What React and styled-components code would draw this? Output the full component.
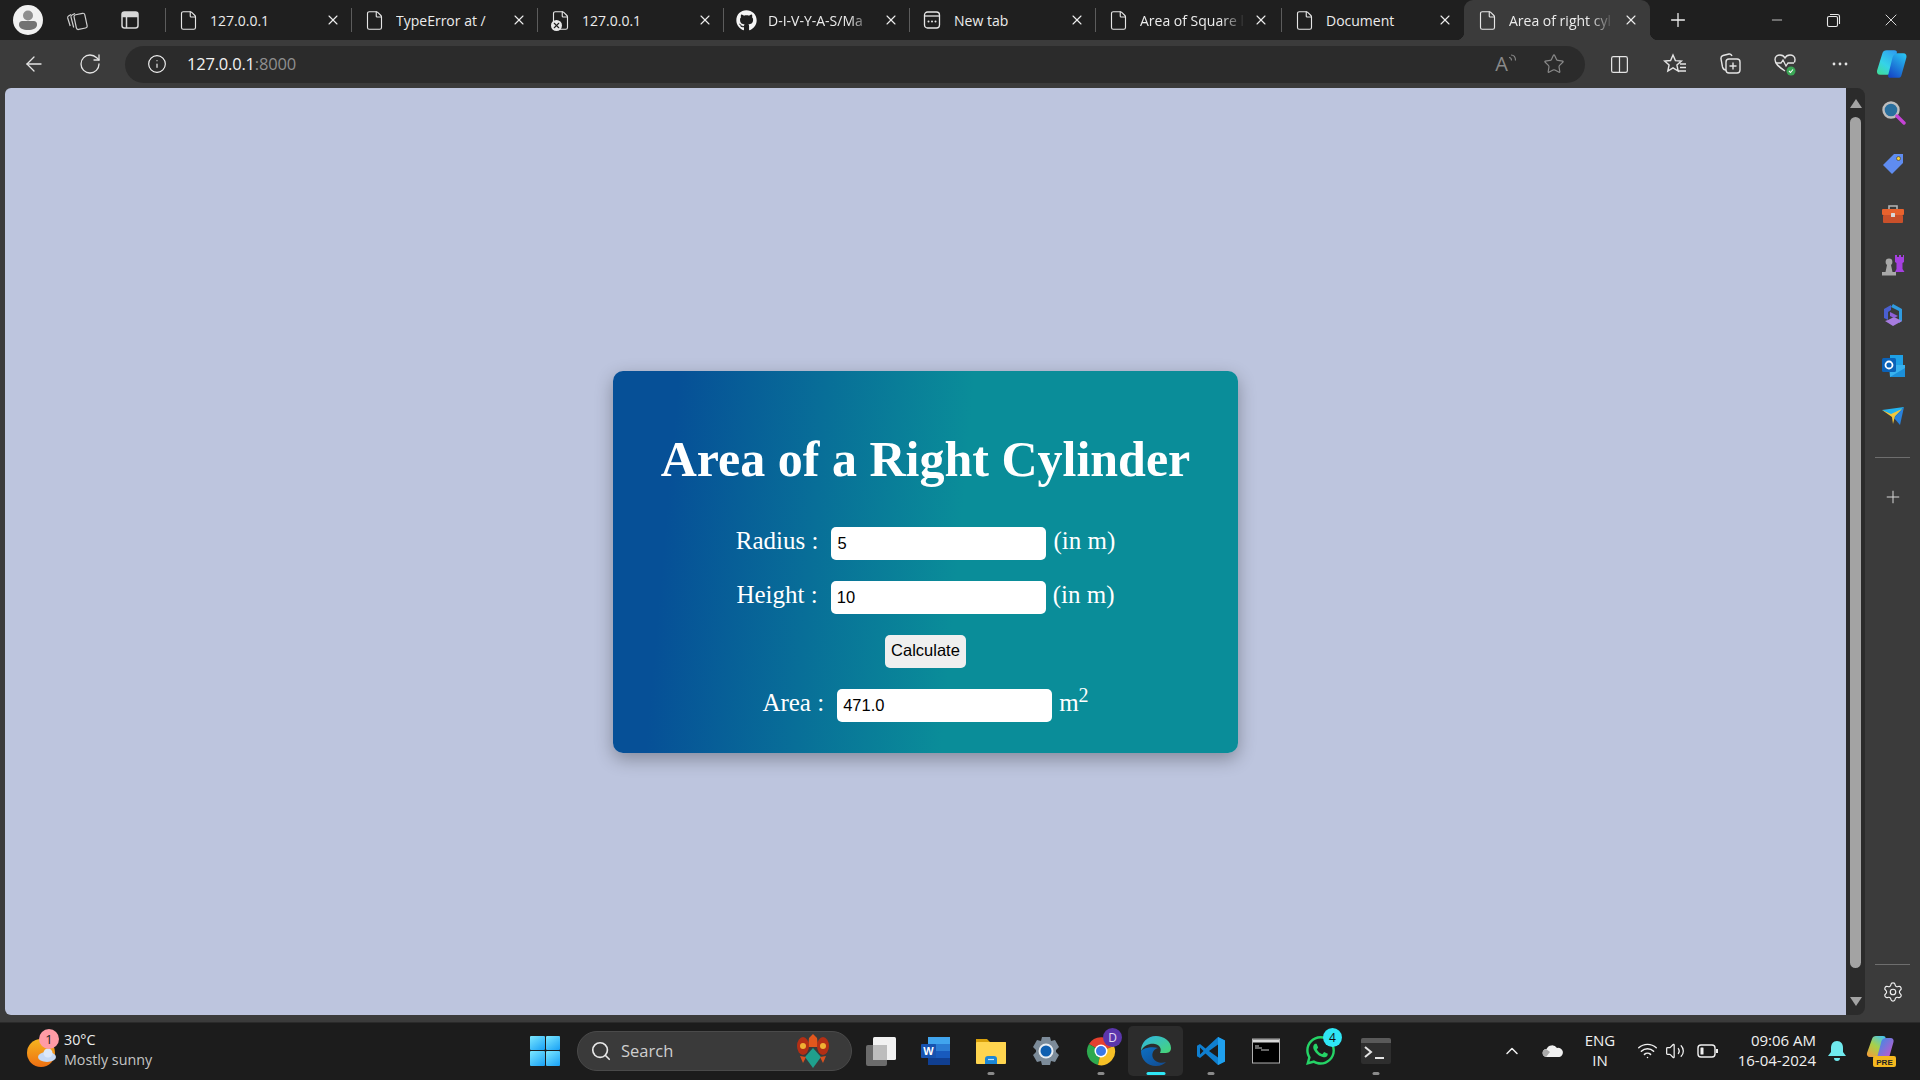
import React from 'react';
import styled, { createGlobalStyle } from 'styled-components';
import {
  File, X, Plus, Minus, ArrowLeft, RotateCw, Info, Star, Settings, Search,
  ChevronUp, Wifi, Volume2, Columns2,
} from 'lucide-react';
import { FaGithub, FaWhatsapp } from 'react-icons/fa';

const UI_FONT = '"Open Sans", "Noto Sans", "Liberation Sans", sans-serif';

const GlobalStyle = createGlobalStyle`
  html, body {
    margin: 0;
    padding: 0;
    overflow: hidden;
    background: #3b3b3b;
  }
  * { box-sizing: border-box; }
`;

const Screen = styled.div`
  width: 1920px;
  height: 1080px;
  display: flex;
  flex-direction: column;
  font-family: ${UI_FONT};
  color: #f2f2f2;
`;

/* tab strip */
const TabStrip = styled.div`
  height: 40px;
  display: flex;
  align-items: stretch;
  background: #1f1f1f;
  flex-shrink: 0;
`;
const StripLeft = styled.div`
  width: 165px;
  display: flex;
  align-items: center;
  padding-left: 13px;
  gap: 23px;
`;
const Avatar = styled.div`
  width: 30px;
  height: 30px;
  margin-right: -4px;
  border-radius: 50%;
  background: #f1f1f1;
  display: flex;
  align-items: center;
  justify-content: center;
`;
const StripButton = styled.div`
  width: 30px;
  display: flex;
  justify-content: center;
  color: #d8d8d8;
`;
const Tab = styled.div`
  width: 186px;
  display: flex;
  align-items: center;
  position: relative;
  padding-left: 12px;
  color: #ececec;
  font-size: 14px;
  background: ${(p) => (p.$active ? '#3b3b3b' : 'transparent')};
  border-radius: ${(p) => (p.$active ? '9px 9px 0 0' : '0')};
  margin-left: ${(p) => (p.$active ? '-3px' : '0')};
  &::before {
    content: '';
    position: absolute;
    left: ${(p) => (p.$active ? '-8px' : '0')};
    top: ${(p) => (p.$active ? 'auto' : '8px')};
    bottom: ${(p) => (p.$active ? '0' : '8px')};
    width: ${(p) => (p.$active ? '8px' : '1px')};
    height: ${(p) => (p.$active ? '8px' : 'auto')};
    background: ${(p) => (p.$active
      ? 'radial-gradient(circle at 0 0, transparent 8px, #3b3b3b 8.5px)'
      : '#5c5c5c')};
  }
  &::after {
    content: '';
    display: ${(p) => (p.$active ? 'block' : 'none')};
    position: absolute;
    right: -8px;
    bottom: 0;
    width: 8px;
    height: 8px;
    background: radial-gradient(circle at 100% 0, transparent 8px, #3b3b3b 8.5px);
  }
`;
const TabIcon = styled.span`
  width: 22px;
  height: 22px;
  display: flex;
  align-items: center;
  justify-content: center;
  flex-shrink: 0;
  position: relative;
  color: #e6e6e6;
`;
const TabBroken = styled.span`
  position: absolute;
  left: 2px;
  bottom: 0;
  width: 11px;
  height: 11px;
  border-radius: 50%;
  background: #e8e8e8;
  color: #1f1f1f;
  display: flex;
  align-items: center;
  justify-content: center;
`;
const TabTitle = styled.span`
  margin-left: 11px;
  width: 112px;
  white-space: nowrap;
  overflow: hidden;
  -webkit-mask-image: ${(p) => (p.$fade ? 'linear-gradient(90deg, #000 72%, transparent 94%)' : 'none')};
  mask-image: ${(p) => (p.$fade ? 'linear-gradient(90deg, #000 72%, transparent 94%)' : 'none')};
`;
const TabClose = styled.span`
  display: flex;
  margin-left: ${(p) => p.$gap ?? 3}px;
  color: #eeeeee;
`;
const NewTab = styled.div`
  margin-left: 17px;
  display: flex;
  align-items: center;
  color: #eeeeee;
`;
const WindowButtons = styled.div`
  margin-left: auto;
  display: flex;
  padding-right: 1px;
`;
const WindowButton = styled.div`
  width: 57px;
  display: flex;
  align-items: center;
  justify-content: center;
  color: #e8e8e8;
`;

/* toolbar */
const Toolbar = styled.div`
  height: 48px;
  display: flex;
  align-items: center;
  background: #3b3b3b;
  flex-shrink: 0;
  padding-left: 22px;
`;
const ToolButton = styled.div`
  width: ${(p) => p.$width || 55}px;
  margin-left: ${(p) => p.$shift || 0}px;
  display: flex;
  justify-content: center;
  color: ${(p) => p.$color || '#e4e4e4'};
  position: relative;
`;
const NavButtons = styled.div`
  display: flex;
  gap: 32px;
  align-items: center;
  width: 103px;
  color: #e4e4e4;
`;
const AddressBar = styled.div`
  width: 1460px;
  height: 37px;
  border-radius: 19px;
  background: #2b2b2b;
  display: flex;
  align-items: center;
  padding-left: 22px;
  font-size: 16.5px;
`;
const Url = styled.span`
  margin-left: 20px;
  padding-bottom: 1px;
  color: #f2f2f2;
  letter-spacing: -0.2px;
`;
const UrlPort = styled.span`
  color: #8f8f8f;
`;
const AddressTools = styled.div`
  margin-left: auto;
  display: flex;
  align-items: center;
  gap: 25px;
  padding-right: 20px;
  color: #8a8a8a;
`;
const ReadAloud = styled.span`
  display: flex;
  align-items: flex-start;
  font-size: 20px;
  color: #8a8a8a;
  line-height: 1;
`;
const ToolGroup = styled.div`
  display: flex;
  align-items: center;
  margin-left: 7px;
`;

/* main area */
const Main = styled.div`
  flex: 1;
  display: flex;
  min-height: 0;
`;
const Page = styled.div`
  flex: 1;
  margin: 0 0 7px 5px;
  background: #bdc5de;
  border-radius: 6px 0 0 6px;
  display: flex;
  justify-content: center;
  align-items: flex-start;
  padding-top: 283px;
`;
const Card = styled.div`
  width: 625px;
  height: 382px;
  padding-top: 60px;
  border-radius: 10px;
  background: linear-gradient(95deg, #065097 10%, #0a8d99 55%, #0a8d99 100%);
  box-shadow: 0 6px 18px rgba(0, 0, 0, 0.3);
  display: flex;
  flex-direction: column;
  align-items: center;
  color: #fff;
  font-family: "Liberation Serif", serif;
`;
const Title = styled.h1`
  margin: 0 0 40px;
  font-size: 50px;
  line-height: 56px;
  font-weight: 700;
  white-space: nowrap;
`;
const FormRow = styled.div`
  display: flex;
  align-items: flex-start;
  height: 33px;
  margin-bottom: 21px;
  font-size: 25px;
  line-height: 27px;
`;
const Label = styled.label`
  margin-right: 13px;
`;
const Field = styled.input`
  width: 215px;
  height: 33px;
  border: none;
  outline: none;
  border-radius: 5px;
  padding: 0 6px 1px;
  margin-right: 7px;
  background: #fff;
  color: #000;
  font-family: "Liberation Sans", sans-serif;
  font-size: 16.5px;
`;
const CalcButton = styled.button`
  width: 81px;
  height: 33px;
  border: none;
  border-radius: 5px;
  background: #efefef;
  color: #000;
  padding: 0 0 3px;
  font-family: "Liberation Sans", sans-serif;
  font-size: 16.5px;
`;
const Sup = styled.sup`
  font-size: 20px;
  line-height: 0;
`;

/* scrollbar */
const ScrollTrack = styled.div`
  width: 19px;
  margin-bottom: 7px;
  background: #2b2b2b;
  border-radius: 0 8px 8px 0;
  display: flex;
  flex-direction: column;
  align-items: center;
  padding-top: 11px;
`;
const ScrollArrow = styled.div`
  width: 0;
  height: 0;
  border-left: 6px solid transparent;
  border-right: 6px solid transparent;
  border-bottom: ${(p) => (p.$down ? '0' : '9px solid #a3a3a3')};
  border-top: ${(p) => (p.$down ? '9px solid #a3a3a3' : '0')};
`;
const ScrollThumb = styled.div`
  width: 11px;
  height: 851px;
  margin: 9px 0 29px;
  border-radius: 6px;
  background: #a3a3a3;
`;

/* right sidebar */
const SideBar = styled.div`
  width: 55px;
  display: flex;
  flex-direction: column;
  align-items: center;
`;
const SideSlot = styled.div`
  height: 50.5px;
  width: 100%;
  display: flex;
  align-items: center;
  justify-content: center;
  flex-shrink: 0;
  color: #d8d8d8;
`;
const SideRule = styled.div`
  width: 35px;
  height: 1px;
  background: #6e6e6e;
  margin: ${(p) => p.$margin};
  flex-shrink: 0;
`;

/* taskbar */
const Taskbar = styled.div`
  height: 58px;
  background: #1c1c1c;
  border-top: 1px solid #2a2a2a;
  padding-bottom: 2px;
  display: flex;
  align-items: center;
  flex-shrink: 0;
  position: relative;
`;
const Weather = styled.div`
  width: 530px;
  display: flex;
  align-items: center;
  padding-left: 27px;
  gap: 5px;
`;
const WeatherIcon = styled.div`
  position: relative;
  width: 32px;
  height: 36px;
`;
const WeatherBadge = styled.span`
  position: absolute;
  top: -4px;
  left: 12px;
  width: 20px;
  height: 20px;
  border-radius: 50%;
  background: #ff9ba6;
  color: #222;
  font-size: 13px;
  line-height: 20px;
  text-align: center;
`;
const WeatherText = styled.div`
  display: flex;
  flex-direction: column;
  padding-bottom: 2px;
  font-size: 14.3px;
  line-height: 20px;
  color: #ededed;
`;
const WeatherSub = styled.span`
  color: #c4c4c4;
`;
const StartIcon = styled.div`
  width: 30px;
  height: 30px;
  display: grid;
  grid-template-columns: 1fr 1fr;
  gap: 1px;
  margin-right: 17px;
`;
const StartPane = styled.span`
  background: linear-gradient(145deg, #7ce8ff, #18a0f5);
  border-radius: 1px;
`;
const SearchPill = styled.div`
  width: 275px;
  height: 40px;
  border-radius: 20px;
  background: #3a3a3a;
  border: 1px solid #4a4a4a;
  display: flex;
  align-items: center;
  padding-left: 12px;
  gap: 9px;
  font-size: 16.5px;
  color: #cfcfcf;
`;
const SearchArt = styled.span`
  margin-left: auto;
  margin-right: 20px;
  display: flex;
`;
const AppIcons = styled.div`
  display: flex;
  margin-left: 1px;
`;
const AppSlot = styled.div`
  width: 55px;
  height: 50px;
  display: flex;
  align-items: center;
  justify-content: center;
  position: relative;
  border-radius: 5px;
  background: ${(p) => (p.$active ? '#2c2c2c' : 'transparent')};
  &::after {
    content: '';
    display: ${(p) => (p.$running || p.$active ? 'block' : 'none')};
    position: absolute;
    bottom: 1px;
    left: 50%;
    transform: translateX(-50%);
    width: ${(p) => (p.$active ? '19px' : '7px')};
    height: 3px;
    border-radius: 2px;
    background: ${(p) => (p.$active ? '#2fe6f5' : '#8a8a8a')};
  }
`;
const AppBadge = styled.span`
  position: absolute;
  top: 2px;
  right: 6px;
  width: 19px;
  height: 19px;
  border-radius: 50%;
  background: ${(p) => p.$bg};
  color: ${(p) => p.$color};
  font-size: 12px;
  line-height: 19px;
  text-align: center;
`;
const Tray = styled.div`
  margin-left: auto;
  display: flex;
  align-items: center;
  height: 100%;
  padding-right: 16px;
  color: #f0f0f0;
`;
const TrayIcon = styled.div`
  width: ${(p) => p.$width}px;
  display: flex;
  justify-content: center;
`;
const Lang = styled.div`
  width: 48px;
  margin-right: 10px;
  padding-bottom: 2px;
  text-align: center;
  font-size: 15px;
  line-height: 20px;
`;
const Clock = styled.div`
  width: 90px;
  padding-bottom: 2px;
  text-align: right;
  font-size: 15px;
  line-height: 20px;
`;

const TabFavicon = ({ kind }) => {
  if (kind === 'github') return <FaGithub size={21} color="#f5f5f5" />;
  if (kind === 'newtab') {
    return (
      <svg width="20" height="20" viewBox="0 0 20 20" fill="none" stroke="#e6e6e6" strokeWidth="1.3">
        <rect x="2.5" y="2" width="15" height="16" rx="3" />
        <path d="M2.5 6h15" />
        <path d="M6.5 11.5h.01M10 11.5h.01M13.5 11.5h.01" strokeWidth="2" strokeLinecap="round" />
      </svg>
    );
  }
  return <File size={21} strokeWidth={1.3} />;
};

const tabs = [
  { title: '127.0.0.1' },
  { title: 'TypeError at /' },
  { title: '127.0.0.1', broken: true },
  { title: 'D-I-V-Y-A-S/Ma', kind: 'github', fade: true },
  { title: 'New tab', kind: 'newtab' },
  { title: 'Area of Square l', fade: true, closeGap: 1 },
  { title: 'Document', closeGap: -1 },
];

const CopilotMark = ({ size = 32 }) => (
  <svg width={size} height={size} viewBox="0 0 30 30">
    <defs>
      <linearGradient id="cpA" x1="0.8" y1="0" x2="0.2" y2="1">
        <stop offset="0" stopColor="#2f9ff0" />
        <stop offset="0.6" stopColor="#35d3e8" />
        <stop offset="1" stopColor="#3fdca0" />
      </linearGradient>
      <linearGradient id="cpB" x1="0.8" y1="0" x2="0.2" y2="1">
        <stop offset="0" stopColor="#28c0f0" />
        <stop offset="1" stopColor="#1548c8" />
      </linearGradient>
    </defs>
    <path d="M10 2h7c2 0 3 1 2.500 3l-4 16c-.7 2.500-2.500 4-5 4H4c-2.500 0-3.500-2-3-4L6 5c.5-2 2-3 4-3z" fill="url(#cpA)" />
    <path d="M21 28h-7c-2 0-3-1-2.500-3l4-16c.7-2.500 2.500-4 5-4h5c2.500 0 3.500 2 3 4l-4.500 16c-.5 2-1.500 3-3.500 3z" fill="url(#cpB)" />
  </svg>
);

const SearchGlass = () => (
  <svg width="26" height="26" viewBox="0 0 26 26">
    <circle cx="11" cy="10" r="7.5" fill="#2a6f9e" stroke="#bdbdbd" strokeWidth="2.4" />
    <path d="M17 16l7 7" stroke="#c643d6" strokeWidth="3.4" strokeLinecap="round" />
  </svg>
);
const TagIcon = () => (
  <svg width="24" height="24" viewBox="0 0 24 24">
    <path d="M2 13L13 2h9v9L11 22z" fill="#5f8cf0" />
    <circle cx="17.5" cy="6.5" r="2" fill="#f5cf3a" stroke="#333" strokeWidth=".6" />
  </svg>
);
const ToolboxIcon = () => (
  <svg width="24" height="22" viewBox="0 0 24 22">
    <path d="M8 6V3h8v3" fill="none" stroke="#b5b5b5" strokeWidth="1.6" />
    <rect x="1" y="6" width="22" height="6" rx="1" fill="#e8622d" />
    <rect x="2" y="12" width="20" height="8" rx="1" fill="#c9502a" />
    <rect x="10" y="10" width="4" height="4" rx=".5" fill="#d8d8d8" />
  </svg>
);
const ChessIcon = () => (
  <svg width="24" height="24" viewBox="0 0 24 24">
    <path d="M14 2h2v2h2V2h2v2h2V2h1v7l-1.500 1v6l2 3H14l1.500-3v-6L14 9z" fill="#a540e0" />
    <circle cx="8" cy="9" r="3.4" fill="#a8a8a8" />
    <path d="M6 12h4l1.500 7H4.500zM1 19h14v3.500H1z" fill="#a8a8a8" />
  </svg>
);
const M365Icon = () => (
  <svg width="24" height="24" viewBox="0 0 24 24">
    <path d="M12 1l9 5v12l-3 2V8l-8-4z" fill="#2f9be0" />
    <path d="M3 6l7-4v5L7 9v8l-4-2z" fill="#4a5fd0" />
    <path d="M7 17l6-3 8 4-9 5-8-5z" fill="#a77ce0" />
    <path d="M9 9l8 4-4 2-4-2z" fill="#8f5fd8" />
  </svg>
);
const OutlookIcon = () => (
  <svg width="24" height="24" viewBox="0 0 24 24">
    <rect x="9" y="1" width="13" height="12" fill="#1ea0e6" />
    <path d="M8 11l16 0v12H9z" fill="#38b1ee" />
    <path d="M9 23l15-9v9z" fill="#1c8fd8" />
    <rect x="1" y="4" width="14" height="14" rx="1.500" fill="#0b62b8" />
    <circle cx="8" cy="11" r="3.500" fill="none" stroke="#fff" strokeWidth="1.800" />
  </svg>
);
const SendIcon = () => (
  <svg width="24" height="20" viewBox="0 0 24 20">
    <path d="M1 4l22-3-9 10z" fill="#22b3f0" />
    <path d="M23 1l-4 18-6-7z" fill="#2a82dc" />
    <path d="M1 4l10 7 1 7 2-8 7-7-11 5z" fill="#f5c63a" />
  </svg>
);

const AvatarGlyph = () => (
  <svg width="20" height="22" viewBox="0 0 20 22">
    <circle cx="10" cy="6.500" r="5" fill="#8e8e8e" />
    <path d="M1 16c0-3 1-4 4-4h10c3 0 4 1 4 4 0 3-4 5-9 5s-9-2-9-5z" fill="#737373" />
  </svg>
);
const CollectionsGlyph = () => (
  <svg width="22" height="22" viewBox="0 0 22 22" fill="none" stroke="#cfcfcf" strokeWidth="1.200" strokeLinejoin="round">
    <rect x="9" y="5" width="11" height="15" rx="2" transform="rotate(-12 14 12)" />
    <path d="M9 4.500l-3 1.500c-1 .5-1.300 1.200-1 2.200l2.700 10.300" />
    <path d="M5 5.500l-2.500 1.500c-.8.500-1 1.200-.8 2l2.500 8" />
  </svg>
);
const TabsGlyph = () => (
  <svg width="20" height="20" viewBox="0 0 20 20" fill="none" stroke="#d8d8d8" strokeWidth="1.500">
    <rect x="2" y="2" width="16" height="16" rx="2.500" />
    <path d="M2 6.500h16M6.500 6.500V18" />
    <path d="M2 2h16v4.500H2z" fill="#d8d8d8" stroke="none" />
  </svg>
);
const CollectionAddGlyph = () => (
  <svg width="22" height="22" viewBox="0 0 22 22" fill="none" stroke="#e4e4e4" strokeWidth="1.400">
    <path d="M7 17c-2 0-3-1-3.500-3L2 6c-.3-2 .5-3 2-3.500l6-1.500c1.500-.3 2.500.5 3 2" />
    <rect x="7" y="6" width="14" height="14" rx="3" />
    <path d="M14 9.500v7M10.500 13h7" />
  </svg>
);
const HealthGlyph = () => (
  <svg width="24" height="24" viewBox="0 0 24 24" fill="none">
    <path d="M12 19C6 15 2 12 2 7.500 2 4.500 4.500 3 7 3c2 0 4 1 5 3 1-2 3-3 5-3 2.500 0 5 1.500 5 4.500 0 1-.2 2-.6 3" stroke="#e4e4e4" strokeWidth="1.400" />
    <path d="M3 11h5l2-3 3 6 2-3h6" stroke="#e4e4e4" strokeWidth="1.300" />
    <circle cx="18" cy="19" r="4.500" fill="#3aa655" />
    <path d="M16 19l1.500 1.500 2.500-3" stroke="#fff" strokeWidth="1.100" />
  </svg>
);
const FavoritesGlyph = () => (
  <svg width="24" height="24" viewBox="0 0 24 24" fill="none" stroke="#e4e4e4" strokeWidth="1.400">
    <path d="M10 3l2.400 5.600 6 .5-4.500 4 1.300 6-5.200-3.200L4.800 19l1.300-6-4.500-4 6-.5z" />
    <path d="M17 12h6M17 15.500h6M15 19h8" />
  </svg>
);
const ReadWaves = () => (
  <svg width="10" height="12" viewBox="0 0 10 12" fill="none" stroke="#8a8a8a" strokeWidth="1.100">
    <path d="M1 3.500c1.500 0 2.500 1.500 2.500 3" />
    <path d="M3 1c3 0 4.500 2.500 4.500 5.500" />
  </svg>
);

const CloudSun = () => (
  <svg width="32" height="36" viewBox="0 0 32 36">
    <defs>
      <linearGradient id="sun" x1="0" y1="0" x2="0" y2="1">
        <stop offset="0" stopColor="#f5b51f" />
        <stop offset="1" stopColor="#ee6f12" />
      </linearGradient>
    </defs>
    <circle cx="14" cy="20" r="14" fill="url(#sun)" />
    <ellipse cx="20" cy="24" rx="9" ry="5" fill="#c6d9f5" />
    <circle cx="21" cy="20" r="4.500" fill="#dce8fa" />
  </svg>
);
const WordIcon = () => (
  <svg width="30" height="30" viewBox="0 0 30 30">
    <rect x="7" y="1" width="22" height="28" rx="1.500" fill="#2b7cd3" />
    <rect x="7" y="1" width="22" height="7" fill="#41a5ee" />
    <rect x="7" y="15" width="22" height="7" fill="#185abd" />
    <rect x="7" y="22" width="22" height="7" fill="#103f91" />
    <rect x="0" y="8" width="15" height="14" rx="1" fill="#1753b0" />
    <text x="7.500" y="19" fill="#fff" fontFamily="Liberation Sans" fontSize="11" fontWeight="700" textAnchor="middle">W</text>
  </svg>
);
const FolderIcon = () => (
  <svg width="30" height="30" viewBox="0 0 30 30">
    <path d="M0 3h11l3 3h16v4H0z" fill="#d9a10b" />
    <rect x="0" y="6" width="30" height="22" rx="1" fill="#ffd54f" />
    <path d="M9 23c0-2 1-3 3-3h6c2 0 3 1 3 3v5H9z" fill="#1b86d6" />
    <path d="M12 23.500h6" stroke="#bfe3fb" strokeWidth="1.200" />
  </svg>
);
const GearApp = () => (
  <svg width="30" height="30" viewBox="0 0 30 30">
    <path d="M11 1h8l1 4 4-1 4 7-3 3v2l3 3-4 7-4-1-1 4h-8l-1-4-4 1-4-7 3-3v-2L2 11l4-7 4 1z" fill="#7c8b99" />
    <circle cx="15" cy="15" r="7.500" fill="#e8edf2" />
    <circle cx="15" cy="15" r="5.500" fill="#0f5fb0" />
  </svg>
);
const ChromeIcon = () => (
  <svg width="30" height="30" viewBox="0 0 30 30">
    <path d="M15 15L3 8a14 14 0 0 1 25 2z" fill="#e5402f" />
    <path d="M15 15l-12-7a14 14 0 0 0 9 21z" fill="#2da94f" />
    <path d="M15 15l13-5a14 14 0 0 1-16 19z" fill="#f6c026" />
    <circle cx="15" cy="15" r="6.500" fill="#fff" />
    <circle cx="15" cy="15" r="5" fill="#3b78e7" />
  </svg>
);
const EdgeIcon = () => (
  <svg width="32" height="32" viewBox="0 0 32 32">
    <defs>
      <linearGradient id="edgeA" x1="0" y1="0" x2="1" y2="1">
        <stop offset="0" stopColor="#2fb5e8" />
        <stop offset="1" stopColor="#48d672" />
      </linearGradient>
      <linearGradient id="edgeB" x1="0" y1="0" x2="1" y2="1">
        <stop offset="0" stopColor="#0c70c4" />
        <stop offset="1" stopColor="#134a8e" />
      </linearGradient>
    </defs>
    <path d="M16 1C7 1 1 8 1 16c3-6 9-8 14-7 5 1 7 5 5 9h6c4 0 5-3 5-5C31 6 24 1 16 1z" fill="url(#edgeA)" />
    <path d="M1 16c0 9 7 15 15 15 5 0 8-2 10-4-5 2-11 0-13-4-2-5 1-9 5-10-6-2-15 0-17 3z" fill="url(#edgeB)" />
  </svg>
);
const VsCodeIcon = () => (
  <svg width="30" height="30" viewBox="0 0 30 30">
    <path d="M22 1l7 3.500v21L22 29 9.500 17.500 4 22l-3-1.800v-10.400L4 8l5.500 4.500z" fill="#0f7fd0" />
    <path d="M22 1l7 3.500v21L22 29z" fill="#1fa0ee" />
    <path d="M22 8.500L13 15l9 6.500z" fill="#1c1c1c" />
    <path d="M4 11.500v7l3.500-3.500z" fill="#1c1c1c" />
  </svg>
);
const ConsoleIcon = () => (
  <svg width="28" height="26" viewBox="0 0 28 26">
    <rect x=".5" y="1" width="27" height="24" fill="#000" stroke="#b0b0b0" />
    <rect x="1" y="1.500" width="26" height="3" fill="#d8d8d8" />
    <path d="M3 8h4M3 10h7M9 12h8" stroke="#ccc" />
  </svg>
);
const TerminalIcon = () => (
  <svg width="30" height="28" viewBox="0 0 30 28">
    <rect x="0" y="1" width="30" height="26" rx="2" fill="#2e2e2e" />
    <path d="M0 3a2 2 0 0 1 2-2h26a2 2 0 0 1 2 2v3H0z" fill="#5a5a5a" />
    <path d="M4 10l6 5-6 5" fill="none" stroke="#e4e4e4" strokeWidth="2" />
    <path d="M14 21h9" stroke="#e4e4e4" strokeWidth="2" />
  </svg>
);
const TaskViewIcon = () => (
  <svg width="30" height="30" viewBox="0 0 30 30">
    <rect x="0" y="9" width="21" height="21" rx="2" fill="#6b6b6b" />
    <rect x="7" y="1" width="23" height="23" rx="1.500" fill="#f2f2f2" />
    <rect x="7" y="9" width="14" height="15" fill="#bdbdbd" />
  </svg>
);
const FlowerArt = () => (
  <svg width="36" height="36" viewBox="0 0 36 36">
    <path d="M18 1l4 4 1 9H13l1-9z" fill="#e2571d" />
    <ellipse cx="8" cy="13" rx="6" ry="9" fill="#b32f15" />
    <ellipse cx="28" cy="13" rx="6" ry="9" fill="#b32f15" />
    <circle cx="8" cy="13" r="3" fill="#f0b133" />
    <circle cx="28" cy="13" r="3" fill="#f0b133" />
    <path d="M18 15l-8 9 8 11 8-11z" fill="#1fa08d" />
    <path d="M5 23l6 1-3 6zM31 23l-6 1 3 6z" fill="#d9501f" />
  </svg>
);
const BatteryGlyph = () => (
  <svg width="22" height="16" viewBox="0 0 22 16" fill="none" stroke="#f0f0f0" strokeWidth="1.400">
    <rect x="1" y="2" width="17" height="12" rx="3" />
    <rect x="3.500" y="4.500" width="3" height="7" rx=".5" fill="#f0f0f0" stroke="none" />
    <path d="M20 6v4" strokeWidth="2" />
  </svg>
);
const OneDriveGlyph = () => (
  <svg width="22" height="14" viewBox="0 0 22 14">
    <path d="M5 13a4 4 0 0 1-.5-8A6 6 0 0 1 15 4a4.500 4.500 0 0 1 2.500 9z" fill="#f0f0f0" />
    <path d="M1 11a4 4 0 0 1 3-6l4 3-4 5z" fill="#a8a8a8" />
  </svg>
);
const BellGlyph = () => (
  <svg width="18" height="22" viewBox="0 0 18 22">
    <path d="M9 1c4 0 6 3 6 7v4l3 4H0l3-4V8c0-4 2-7 6-7z" fill="#6fe9ee" />
    <path d="M6 18h6a3 3 0 0 1-6 0z" fill="#6fe9ee" />
  </svg>
);
const CopilotPre = () => (
  <svg width="30" height="32" viewBox="0 0 30 32">
    <defs>
      <linearGradient id="preA" x1="0.8" y1="0" x2="0.2" y2="1">
        <stop offset="0" stopColor="#4ac6e8" />
        <stop offset=".5" stopColor="#a6d14a" />
        <stop offset="1" stopColor="#f0a03a" />
      </linearGradient>
      <linearGradient id="preB" x1="0" y1="0" x2="1" y2="1">
        <stop offset="0" stopColor="#2f8fe8" />
        <stop offset="1" stopColor="#d950c8" />
      </linearGradient>
    </defs>
    <path d="M10 1h7c2 0 3 1 2.500 3l-4 15c-.7 2-2.500 3-5 3H4c-2.500 0-3.500-2-3-4L6 4c.5-2 2-3 4-3z" fill="url(#preA)" />
    <path d="M21 24h-7c-2 0-3-1-2.500-3l4-15c.7-2 2.500-3 5-3h4c2.500 0 3.500 2 3 4l-4 14c-.5 2-1.500 3-2.500 3z" fill="url(#preB)" />
    <rect x="7" y="21" width="23" height="11" rx="2" fill="#f5b81f" />
    <text x="18.500" y="29.500" fill="#222" fontFamily="Liberation Sans" fontSize="8" fontWeight="700" textAnchor="middle">PRE</text>
  </svg>
);

const sideIcons = [SearchGlass, TagIcon, ToolboxIcon, ChessIcon, M365Icon, OutlookIcon, SendIcon];

const App = () => {
  return (
    <Screen>
      <GlobalStyle />
      <TabStrip>
        <StripLeft>
          <Avatar><AvatarGlyph /></Avatar>
          <StripButton><CollectionsGlyph /></StripButton>
          <StripButton><TabsGlyph /></StripButton>
        </StripLeft>
        {tabs.map((tab) => (
          <Tab key={tab.title + tab.kind + tab.broken}>
            <TabIcon>
              <TabFavicon kind={tab.kind} />
              {tab.broken && <TabBroken><X size={9} strokeWidth={3} /></TabBroken>}
            </TabIcon>
            <TabTitle $fade={tab.fade}>{tab.title}</TabTitle>
            <TabClose $gap={tab.closeGap}><X size={16} strokeWidth={1.6} /></TabClose>
          </Tab>
        ))}
        <Tab $active>
          <TabIcon><File size={21} strokeWidth={1.3} /></TabIcon>
          <TabTitle $fade>Area of right cyl</TabTitle>
          <TabClose $gap={2}><X size={16} strokeWidth={1.6} /></TabClose>
        </Tab>
        <NewTab><Plus size={22} strokeWidth={1.4} /></NewTab>
        <WindowButtons>
          <WindowButton><Minus size={16} strokeWidth={1.2} /></WindowButton>
          <WindowButton><svg width="15" height="15" viewBox="0 0 15 15" fill="none" stroke="#e8e8e8" strokeWidth="1.100"><rect x="1.500" y="3.500" width="10" height="10" rx="1.500" /><path d="M4 1.500h7.500a2 2 0 0 1 2 2V11" /></svg></WindowButton>
          <WindowButton><X size={20} strokeWidth={1.1} /></WindowButton>
        </WindowButtons>
      </TabStrip>

      <Toolbar>
        <NavButtons>
          <ArrowLeft size={24} strokeWidth={1.3} />
          <RotateCw size={24} strokeWidth={1.3} />
        </NavButtons>
        <AddressBar>
          <Info size={20} strokeWidth={1.4} />
          <Url>127.0.0.1<UrlPort>:8000</UrlPort></Url>
          <AddressTools>
            <ReadAloud>A<ReadWaves /></ReadAloud>
            <Star size={22} strokeWidth={1.3} />
          </AddressTools>
        </AddressBar>
        <ToolGroup>
          <ToolButton><Columns2 size={21} strokeWidth={1.4} /></ToolButton>
          <ToolButton><FavoritesGlyph /></ToolButton>
          <ToolButton><CollectionAddGlyph /></ToolButton>
          <ToolButton><HealthGlyph /></ToolButton>
          <ToolButton>
            <svg width="16" height="4" viewBox="0 0 16 4" fill="#e4e4e4"><circle cx="2" cy="2" r="1.400" /><circle cx="8" cy="2" r="1.400" /><circle cx="14" cy="2" r="1.400" /></svg>
          </ToolButton>
          <ToolButton $width={35} $shift={7}><CopilotMark /></ToolButton>
        </ToolGroup>
      </Toolbar>

      <Main>
        <Page>
          <Card>
            <Title>Area of a Right Cylinder</Title>
            <FormRow>
              <Label>Radius :</Label>
              <Field defaultValue="5" />
              (in m)
            </FormRow>
            <FormRow>
              <Label>Height :</Label>
              <Field defaultValue="10" />
              (in m)
            </FormRow>
            <FormRow>
              <CalcButton>Calculate</CalcButton>
            </FormRow>
            <FormRow>
              <Label>Area :</Label>
              <Field defaultValue="471.0" />
              <span>m<Sup>2</Sup></span>
            </FormRow>
          </Card>
        </Page>
        <ScrollTrack>
          <ScrollArrow />
          <ScrollThumb />
          <ScrollArrow $down />
        </ScrollTrack>
        <SideBar>
          {sideIcons.map((Icon) => (
            <SideSlot key={Icon.name}><Icon /></SideSlot>
          ))}
          <SideRule $margin="15px 0 14px" />
          <SideSlot><Plus size={20} strokeWidth={1.2} /></SideSlot>
          <SideRule $margin="442px 0 2px" />
          <SideSlot><Settings size={22} strokeWidth={1.3} color="#f0f0f0" /></SideSlot>
        </SideBar>
      </Main>

      <Taskbar>
        <Weather>
          <WeatherIcon>
            <CloudSun />
            <WeatherBadge>1</WeatherBadge>
          </WeatherIcon>
          <WeatherText>
            <span>30°C</span>
            <WeatherSub>Mostly sunny</WeatherSub>
          </WeatherText>
        </Weather>
        <StartIcon>
          <StartPane /><StartPane /><StartPane /><StartPane />
        </StartIcon>
        <SearchPill>
          <Search size={22} strokeWidth={1.8} color="#e8e8e8" />
          Search
          <SearchArt><FlowerArt /></SearchArt>
        </SearchPill>
        <AppIcons>
          <AppSlot><TaskViewIcon /></AppSlot>
          <AppSlot><WordIcon /></AppSlot>
          <AppSlot $running><FolderIcon /></AppSlot>
          <AppSlot><GearApp /></AppSlot>
          <AppSlot $running><ChromeIcon /><AppBadge $bg="#5b36ac" $color="#e2dcf5">D</AppBadge></AppSlot>
          <AppSlot $active><EdgeIcon /></AppSlot>
          <AppSlot $running><VsCodeIcon /></AppSlot>
          <AppSlot><ConsoleIcon /></AppSlot>
          <AppSlot><FaWhatsapp size={33} color="#25d366" /><AppBadge $bg="#2fe6f5" $color="#111">4</AppBadge></AppSlot>
          <AppSlot $running><TerminalIcon /></AppSlot>
        </AppIcons>
        <Tray>
          <TrayIcon $width={36}><ChevronUp size={20} strokeWidth={1.8} /></TrayIcon>
          <TrayIcon $width={46}><OneDriveGlyph /></TrayIcon>
          <Lang>ENG<br />IN</Lang>
          <TrayIcon $width={26}><Wifi size={21} strokeWidth={1.7} /></TrayIcon>
          <TrayIcon $width={30}><Volume2 size={20} strokeWidth={1.5} /></TrayIcon>
          <TrayIcon $width={36}><BatteryGlyph /></TrayIcon>
          <Clock>09:06 AM<br />16-04-2024</Clock>
          <TrayIcon $width={42}><BellGlyph /></TrayIcon>
          <TrayIcon $width={46}><CopilotPre /></TrayIcon>
        </Tray>
      </Taskbar>
    </Screen>
  );
};

export default App;
